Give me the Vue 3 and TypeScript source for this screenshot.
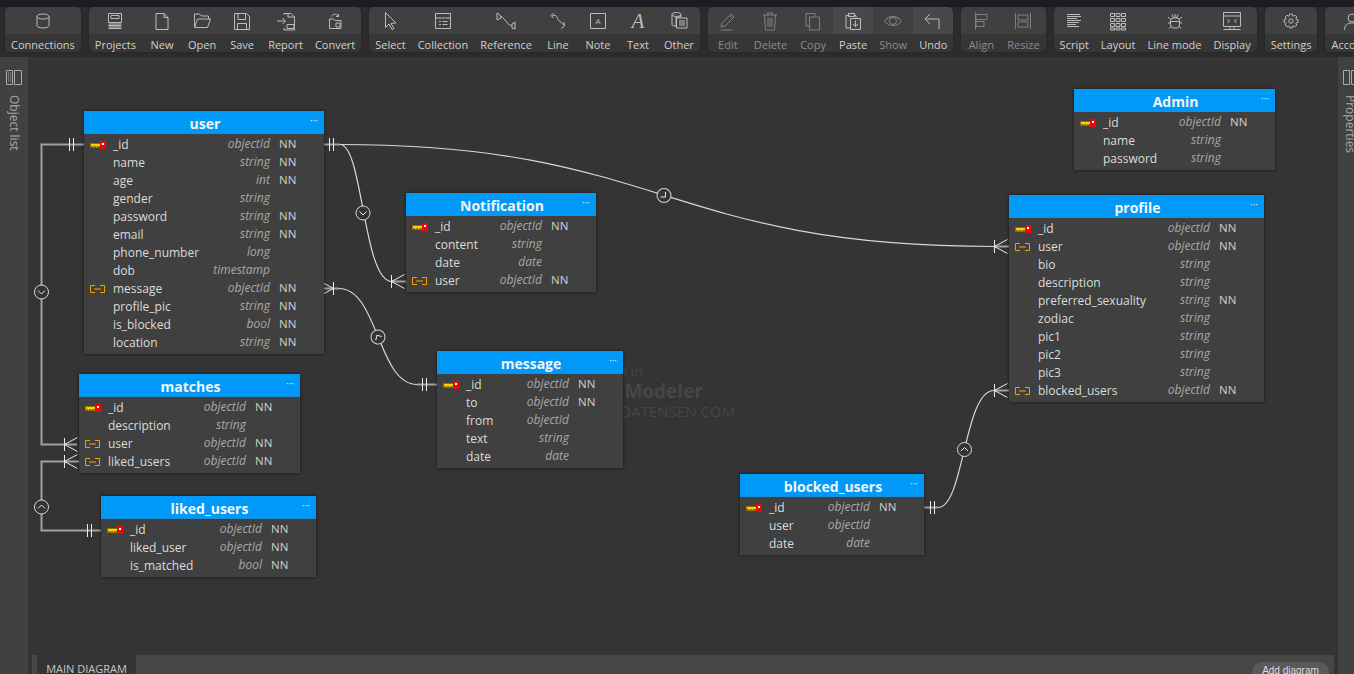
<template>
  <div class="app">
    <header class="toolbar">
      <div v-for="(group, g) in toolGroups" :key="g" class="tool-group">
        <div
          v-for="tool in group.tools"
          :key="tool.label"
          :class="['tool', { disabled: tool.disabled, active: tool.active }]"
        >
          <div class="tool-icon">
            <svg width="24" height="24" viewBox="0 0 24 24" fill="none" stroke="currentColor" stroke-width="1">
              <path v-for="(d, i) in tool.paths" :key="i" :d="d" />
              <text v-if="tool.glyph" :class="tool.glyphClass" x="12" :y="tool.glyphY" text-anchor="middle">{{ tool.glyph }}</text>
            </svg>
          </div>
          <div class="tool-label">{{ tool.label }}</div>
        </div>
      </div>
    </header>

    <div class="main">
      <aside class="side">
        <svg class="side-icon" width="16" height="16" viewBox="0 0 16 16" fill="none" stroke="currentColor">
          <path d="M.5 .5h6v14h-6z M8.500 .5h7v14h-7z" />
          <path d="M2 3h3M2 5h3M2 7h3M2 9h3M2 11h3" stroke-dasharray="1 1" />
        </svg>
        <span class="side-text">Object list</span>
      </aside>

      <section class="workspace">
        <div class="diagram">
          <div class="watermark">
            <span class="wm-small">Designed in</span>
            <span class="wm-big">Moon Modeler</span>
            <span class="wm-url">DATENSEN.COM</span>
          </div>

          <svg class="lines" width="1310" height="598" viewBox="28 57 1310 598" fill="none">
            <path v-for="(d, i) in stubs" :key="'s' + i" class="stub" :d="d" />
            <path v-for="(d, i) in curves" :key="'c' + i" class="curve" :d="d" />
            <path v-for="(d, i) in markers" :key="'m' + i" class="marker" :d="d" />
            <g v-for="(b, i) in bubbles" :key="'b' + i" :transform="`translate(${b.x} ${b.y}) rotate(${b.angle})`">
              <circle class="bubble" r="7" />
              <path class="marker" d="M-3.5 -1.5 L0 2 L3.5 -1.5" />
            </g>
          </svg>

          <div
            v-for="table in tables"
            :key="table.name"
            class="table"
            :style="{ left: table.x - 28 + 'px', top: table.y - 57 + 'px', width: table.w + 'px' }"
          >
            <div class="table-head">
              {{ table.name }}
              <span class="table-menu">···</span>
            </div>
            <div class="table-body">
              <div v-for="field in table.fields" :key="field[0]" class="row">
                <span class="row-icon">
                  <svg v-if="field[3] === 'pk'" width="16" height="8" viewBox="0 0 16 8" shape-rendering="crispEdges">
                    <rect x="0" y="2" width="10" height="5" fill="#8d7000" />
                    <rect x="1" y="3" width="9" height="1.500" fill="#ffd000" />
                    <rect x="3" y="4" width="1" height="2" fill="#ffd000" />
                    <rect x="6" y="4" width="1" height="2" fill="#ffd000" />
                    <rect x="9.500" y="0" width="6.500" height="8" fill="#e80a0a" />
                    <rect x="12" y="2" width="2" height="2" fill="#fff" />
                  </svg>
                  <svg v-else-if="field[3] === 'fk'" width="15" height="8" viewBox="0 0 15 8" fill="none" stroke="#f0a000">
                    <path d="M5 .5H.5v7H5M10 .5h4.500v7H10M4 4h7" />
                  </svg>
                </span>
                <span class="row-name">{{ field[0] }}</span>
                <span class="row-type">{{ field[1] }}</span>
                <span class="row-nn">{{ field[2] ? 'NN' : '' }}</span>
              </div>
            </div>
          </div>
        </div>

        <footer class="tabs">
          <div class="tab">MAIN DIAGRAM</div>
          <div class="add-diagram">Add diagram</div>
        </footer>
      </section>

      <aside class="side side-right">
        <svg class="side-icon" width="16" height="16" viewBox="0 0 16 16" fill="none" stroke="currentColor">
          <path d="M.5 .5h6v14h-6z M8.500 .5h7v14h-7z" />
        </svg>
        <span class="side-text">Properties</span>
      </aside>
    </div>
  </div>
</template>

<script setup lang="ts">
interface Tool {
  label: string;
  paths: string[];
  disabled?: boolean;
  active?: boolean;
  glyph?: string;
  glyphY?: number;
  glyphClass?: string;
}

interface ToolGroup {
  tools: Tool[];
}

type Field = [string, string, boolean, ("pk" | "fk")?];

interface Table {
  name: string;
  x: number;
  y: number;
  w: number;
  fields: Field[];
}

// eight-toothed gear around the icon centre
const gearPath = (): string => {
  const points: string[] = [];
  for (let i = 0; i < 8; i++) {
    const a = (i * Math.PI) / 4;
    for (const [r, da] of [[5.4, -0.34], [7, -0.18], [7, 0.18], [5.4, 0.34]]) {
      const x = 12 + r * Math.cos(a + da);
      const y = 12 + r * Math.sin(a + da);
      points.push(`${x.toFixed(2)} ${y.toFixed(2)}`);
    }
  }
  return `M${points.join("L")}z`;
};

const toolGroups: ToolGroup[] = [
  {
    tools: [
      {
        label: "Connections",
        paths: ["M6 7.500a6 2.500 0 0 1 12 0v9a6 2.500 0 0 1-12 0z", "M6 7.500a6 2.500 0 0 0 12 0"],
      },
    ],
  },
  {
    tools: [
      {
        label: "Projects",
        paths: ["M5.500 4.500h13v9h-13z", "M8 6.500h8v3H8z", "M5.500 15h13M5.500 16.500h13M5.500 18h13M5.500 19.500h13"],
      },
      { label: "New", paths: ["M6 4.500h8l4 4v12H6z", "M14 4.500v4h4"] },
      { label: "Open", paths: ["M4.500 18.500V5h5l2 2h7v3", "M4.500 18.500l3-8.500h13l-3 8.500z"] },
      { label: "Save", paths: ["M4.500 4.500h12l3 3v13h-15z", "M8 4.500v6h7.500v-6", "M7.500 20.500v-6h9v6"] },
      {
        label: "Report",
        paths: ["M3 12h8", "M8.500 9l3 3-3 3", "M10 6V4.500h7l3.500 3.500v13H10v-2", "M14 4.500V8h6.500", "M13 15.500h7v4h-7z"],
      },
      {
        label: "Convert",
        paths: ["M6.500 13V10h4l1.500 1.500h6v8h-11.500z", "M9 7.500c0-3 5-3 6.500 0", "M15.500 5v2.500H13", "M13 14h4v4h-4z"],
      },
    ],
  },
  {
    tools: [
      { label: "Select", paths: ["M7.500 3.500v15l3.500-3.500 3 5.500 2-1-3-5 5-.5z"] },
      {
        label: "Collection",
        paths: ["M4.500 4.500h15v15h-15z", "M4.500 9h15", "M8 12.500h2M11.500 12.500h5M8 15.500h2M11.500 15.500h5"],
      },
      {
        label: "Reference",
        paths: ["M3 4v7l4-2-1-3z", "M7 7l5 5c2 3.500 4 4 6 5", "M21 13v7l-3-1v-4z"],
      },
      { label: "Line", paths: ["M6 7l3-1c3 2 2 5 5 6.500l4.500 4", "M7.500 4L5 6.500 7.500 9", "M15 19.500l3.500-2.500-.5-4"] },
      {
        label: "Note",
        paths: ["M4.500 4.500h15v15h-15z"],
        glyph: "A",
        glyphY: 15,
        glyphClass: "glyph-note",
      },
      { label: "Text", paths: [], glyph: "A", glyphY: 19, glyphClass: "glyph-text" },
      {
        label: "Other",
        paths: [
          "M5 5.500a4.500 2 0 0 1 9 0V8H9v9H7c-1 0-2-.5-2-1.500z",
          "M5 5.500a4.500 2 0 0 0 9 0",
          "M9.500 9h10.500v10H9.500z",
          "M12 12h6M12 14h6M12 16h6",
        ],
      },
    ],
  },
  {
    tools: [
      { label: "Edit", disabled: true, paths: ["M5 18l1-4L15 5l3 3-9 9z", "M13.500 6.500l3 3", "M4.500 21h12"] },
      {
        label: "Delete",
        disabled: true,
        paths: ["M5 6h14", "M9.500 6V4h5v2", "M6.500 6l1 15h9l1-15", "M10 9v9M12 9v9M14 9v9"],
      },
      { label: "Copy", disabled: true, paths: ["M5 4.500h9V7", "M5 4.500V17h3", "M8.500 8h10v13h-10z"] },
      {
        label: "Paste",
        active: true,
        paths: [
          "M8.500 6.500H5V19h4",
          "M7.500 4.500h6v3h-6z",
          "M13 6.500h2V9",
          "M9.500 9.500h10v11h-10z",
          "M14.500 11.500v6M12 15l2.500 2.500L17 15",
        ],
      },
      {
        label: "Show",
        disabled: true,
        paths: ["M3.500 12c4-6 13-6 17 0-4 6-13 6-17 0z", "M8.500 12a3.500 3.500 0 1 0 7 0a3.500 3.500 0 1 0-7 0z", "M5.500 10c4-3 9-3 13 0"],
      },
      { label: "Undo", active: true, paths: ["M9 5l-5 5 5 5", "M4 10h14v10"] },
    ],
  },
  {
    tools: [
      {
        label: "Align",
        disabled: true,
        paths: ["M6.500 3.500v17", "M7 5.500h11v5H7z", "M7 12.500h8v5H7z"],
      },
      {
        label: "Resize",
        disabled: true,
        paths: ["M4.500 4v16M19.500 4v16", "M7 6h10v5H7zM7 13h10v5H7z"],
      },
    ],
  },
  {
    tools: [
      {
        label: "Script",
        paths: ["M5 5.500h13M5 7.500h14M5 9.500h10M5 11.500h14M5 13.500h12M5 15.500h9M5 17.500h12"],
      },
      {
        label: "Layout",
        paths: [
          "M4.500 4.500h4v3h-4zM10 4.500h4v3h-4zM15.500 4.500h4v3h-4z",
          "M4.500 9.500h4v3h-4zM10 9.500h4v3h-4zM15.500 9.500h4v3h-4z",
          "M4.500 14.500h4v3h-4zM10 14.500h4v3h-4zM15.500 14.500h4v3h-4z",
          "M4.500 19h4v2h-4zM10 19h4v2h-4zM15.500 19h4v2h-4z",
        ],
      },
      {
        label: "Line mode",
        paths: [
          "M9 9h6l1.500 2.500V16l-2 3h-5l-2-3v-4.500z",
          "M7.500 12.500h9",
          "M12 5v4M9 5.500l1.500 3.500M15 5.500L13.500 9",
          "M5 8l3 2.500M19 8l-3 2.500M5 14h2.500M19 14h-2.500M6 19.500l2.500-2.500M18 19.500L15.500 17",
        ],
      },
      {
        label: "Display",
        paths: ["M3.500 3.500h17v14h-17z", "M3.500 7h17", "M7.500 10.500l2 1.500-2 1.500M16.500 10.500l-2 1.500 2 1.500", "M3.500 20.500h17M10 18v2.500M14 18v2.500"],
      },
    ],
  },
  {
    tools: [{ label: "Settings", paths: [gearPath(), "M9.800 12a2.200 2.200 0 1 0 4.400 0a2.200 2.200 0 1 0-4.400 0z"] }],
  },
  {
    tools: [{ label: "Account", paths: ["M8 9a4 4 0 1 0 8 0a4 4 0 1 0-8 0z", "M4.500 21c0-5 3-7 7.500-7s7.500 2 7.500 7"] }],
  },
];

const tables: Table[] = [
  {
    name: "user",
    x: 84,
    y: 111,
    w: 240,
    fields: [
      ["_id", "objectId", true, "pk"],
      ["name", "string", true],
      ["age", "int", true],
      ["gender", "string", false],
      ["password", "string", true],
      ["email", "string", true],
      ["phone_number", "long", false],
      ["dob", "timestamp", false],
      ["message", "objectId", true, "fk"],
      ["profile_pic", "string", true],
      ["is_blocked", "bool", true],
      ["location", "string", true],
    ],
  },
  {
    name: "matches",
    x: 79,
    y: 374,
    w: 221,
    fields: [
      ["_id", "objectId", true, "pk"],
      ["description", "string", false],
      ["user", "objectId", true, "fk"],
      ["liked_users", "objectId", true, "fk"],
    ],
  },
  {
    name: "liked_users",
    x: 101,
    y: 496,
    w: 215,
    fields: [
      ["_id", "objectId", true, "pk"],
      ["liked_user", "objectId", true],
      ["is_matched", "bool", true],
    ],
  },
  {
    name: "Notification",
    x: 406,
    y: 193,
    w: 190,
    fields: [
      ["_id", "objectId", true, "pk"],
      ["content", "string", false],
      ["date", "date", false],
      ["user", "objectId", true, "fk"],
    ],
  },
  {
    name: "message",
    x: 437,
    y: 351,
    w: 186,
    fields: [
      ["_id", "objectId", true, "pk"],
      ["to", "objectId", true],
      ["from", "objectId", false],
      ["text", "string", false],
      ["date", "date", false],
    ],
  },
  {
    name: "Admin",
    x: 1074,
    y: 89,
    w: 201,
    fields: [
      ["_id", "objectId", true, "pk"],
      ["name", "string", false],
      ["password", "string", false],
    ],
  },
  {
    name: "profile",
    x: 1009,
    y: 195,
    w: 255,
    fields: [
      ["_id", "objectId", true, "pk"],
      ["user", "objectId", true, "fk"],
      ["bio", "string", false],
      ["description", "string", false],
      ["preferred_sexuality", "string", true],
      ["zodiac", "string", false],
      ["pic1", "string", false],
      ["pic2", "string", false],
      ["pic3", "string", false],
      ["blocked_users", "objectId", true, "fk"],
    ],
  },
  {
    name: "blocked_users",
    x: 740,
    y: 474,
    w: 184,
    fields: [
      ["_id", "objectId", true, "pk"],
      ["user", "objectId", false],
      ["date", "date", false],
    ],
  },
];

// one = double bar, many = bar with a fork opening towards the table
const oneMark = (x: number, y: number): string =>
  `M${x} ${y - 6.5}v13M${x + 4} ${y - 6.5}v13`;
const manyMark = (x: number, y: number, dir: number): string =>
  `M${x} ${y - 6.5}v13M${x} ${y}L${x + dir * 13} ${y - 7}M${x} ${y}L${x + dir * 13} ${y + 7}`;

const stubs: string[] = [
  "M84 144.500H41.500V444.500H77",
  "M79 461.500H41.500V530.500H101",
  "M324 144.500H340",
  "M324 288.500H339",
  "M392 281.500H406",
  "M417 384.500H437",
  "M994 246.500H1009",
  "M994 390.500H1009",
  "M924 507.500H938",
];

const curves: string[] = [
  "M340 144.500C664 144.500 664 246.500 994 246.500",
  "M340 144.500C363 144.500 363 281.500 392 281.500",
  "M339 288.500C378 288.500 378 384.500 417 384.500",
  "M938 507.500C964 507.500 964 390.500 994 390.500",
];

const markers: string[] = [
  oneMark(69.5, 144.5),
  oneMark(329.5, 144.5),
  manyMark(64.5, 444.5, 1),
  manyMark(64.5, 461.5, 1),
  oneMark(87.5, 530.5),
  manyMark(391.5, 281.5, 1),
  manyMark(333.5, 288.5, -1),
  oneMark(422.5, 384.5),
  manyMark(994.5, 246.5, 1),
  manyMark(994.5, 390.5, 1),
  oneMark(930.5, 507.5),
];

const bubbles = [
  { x: 41.5, y: 292, angle: 0 },
  { x: 41.5, y: 507, angle: 180 },
  { x: 363, y: 213, angle: 0 },
  { x: 378, y: 337, angle: 150 },
  { x: 664, y: 195.5, angle: -45 },
  { x: 964.5, y: 449.5, angle: 180 },
];
</script>

<style scoped>
.app {
  display: flex;
  flex-direction: column;
  height: 100vh;
  overflow: hidden;
  background: #343434;
  font-family: "Open Sans", "Noto Sans", sans-serif;
  color: #ddd;
}

.toolbar {
  flex: none;
  display: flex;
  gap: 8px;
  height: 50px;
  padding: 7px 0 0 5px;
  background: #2c2c2c;
  box-shadow: inset 0 7px 0 #1f1b22;
  overflow: hidden;
}

.tool-group {
  flex: none;
  display: flex;
  height: 45px;
  border-radius: 5px;
  overflow: hidden;
  background: #363636;
  box-shadow: 0 0 2px #222;
}

.tool {
  flex: none;
  display: flex;
  flex-direction: column;
  align-items: center;
  min-width: 40px;
  color: #bcbcbc;
}

.tool.disabled {
  color: #808080;
}

.tool-icon {
  display: flex;
  align-items: center;
  justify-content: center;
  width: 100%;
  height: 27px;
  background: #404040;
}

.tool.active .tool-icon {
  background: #484848;
}

.tool-label {
  height: 18px;
  padding: 0 6px;
  color: #cfcfcf;
  font-size: 11px;
  line-height: 22px;
  white-space: nowrap;
}

.tool.disabled .tool-label {
  color: #8c8c8c;
}

.glyph-note {
  font: 8px "Open Sans", sans-serif;
  fill: currentColor;
  stroke: none;
}

.glyph-text {
  font: italic 21px "Liberation Serif", serif;
  fill: currentColor;
  stroke: none;
}

.main {
  flex: 1;
  display: flex;
  min-height: 0;
}

.side {
  flex: none;
  display: flex;
  flex-direction: column;
  align-items: center;
  gap: 9px;
  width: 28px;
  padding-top: 13px;
  box-sizing: border-box;
  background: #414141;
  color: #aaa;
  overflow: hidden;
}

.side-right {
  width: 16px;
  align-items: flex-start;
  padding-left: 5px;
}

.side-right .side-text {
  margin-left: -1px;
}

.side-icon {
  flex: none;
}

.side-text {
  writing-mode: vertical-rl;
  font-size: 12px;
  line-height: 16px;
  white-space: nowrap;
}

.workspace {
  flex: 1;
  display: flex;
  flex-direction: column;
  min-width: 0;
}

.diagram {
  position: relative;
  flex: 1;
  overflow: hidden;
}

.lines {
  position: absolute;
  left: 0;
  top: 0;
}

.stub {
  stroke: #a0a0a0;
  stroke-width: 2;
}

.curve {
  stroke: #d8d8d8;
  stroke-width: 1.2;
}

.marker {
  stroke: #ececec;
  stroke-width: 1;
  fill: none;
}

.bubble {
  fill: #343434;
  stroke: #d8d8d8;
  stroke-width: 1;
}

.watermark {
  position: absolute;
  left: 507px;
  top: 305px;
  width: 200px;
  display: flex;
  flex-direction: column;
  align-items: flex-end;
  color: #464646;
  white-space: nowrap;
}

.wm-small {
  margin-right: 92px;
  font-size: 14px;
  line-height: 20px;
}

.wm-big {
  margin-right: 32px;
  font-size: 19px;
  font-weight: 700;
  line-height: 19px;
}

.wm-url {
  font-size: 15px;
  line-height: 21px;
}

.table {
  position: absolute;
  background: #404040;
  padding-bottom: 3px;
  box-shadow: 0 0 3px rgba(0, 0, 0, 0.65);
}

.table-head {
  position: relative;
  height: 23px;
  margin-bottom: 1px;
  padding-left: 2px;
  background: #0099f7;
  border-bottom: 1px solid #1b8fd8;
  box-sizing: border-box;
  color: #f4f4f4;
  font-size: 14px;
  font-weight: 700;
  line-height: 25px;
  text-align: center;
}

.table-menu {
  position: absolute;
  right: 6px;
  top: -3px;
  color: #d6edff;
  font-size: 10px;
  font-weight: 400;
}

.row {
  display: flex;
  align-items: center;
  height: 18px;
  white-space: nowrap;
}

.row-icon {
  flex: none;
  display: flex;
  align-items: center;
  width: 29px;
  padding: 1px 0 0 6px;
  box-sizing: border-box;
}

.row-name {
  flex: 1;
  font-size: 12px;
  color: #dcdcdc;
}

.row-type {
  margin-top: -1px;
  font-size: 12px;
  font-style: italic;
  color: #a8a8a8;
}

.row-nn {
  flex: none;
  width: 54px;
  margin-top: -1px;
  padding-left: 9px;
  box-sizing: border-box;
  font-size: 11.5px;
  color: #cfcfcf;
}

.tabs {
  flex: none;
  display: flex;
  justify-content: space-between;
  height: 19px;
  margin: 0 4px;
  padding-left: 5px;
  background: #464646;
  overflow: hidden;
}

.tab {
  width: 99px;
  background: #343434;
  color: #c8c8c8;
  font-size: 11px;
  line-height: 28px;
  text-align: center;
}

.add-diagram {
  width: 77px;
  height: 24px;
  margin: 7px 5px 0 0;
  border-radius: 10px;
  background: #5a5a5a;
  color: #ddd;
  font-family: "Liberation Sans", sans-serif;
  font-size: 10px;
  line-height: 18px;
  text-align: center;
}
</style>
